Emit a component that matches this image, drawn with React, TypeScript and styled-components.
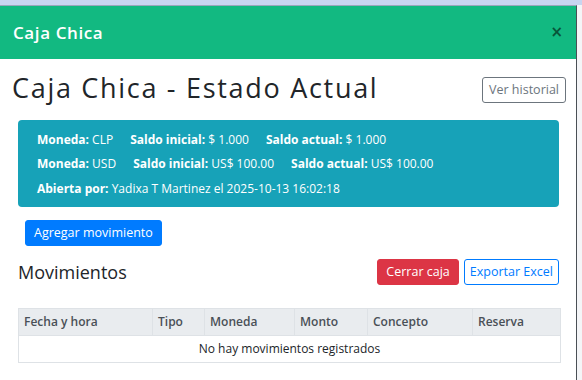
import React from 'react';
import styled, { createGlobalStyle } from 'styled-components';

const GlobalStyle = createGlobalStyle`
  html, body {
    margin: 0;
    padding: 0;
  }
  body {
    background: linear-gradient(180deg, #c8d5f0 0px, #c8d5f0 5px, #f4f5f7 5px);
    font-family: 'Open Sans', 'Liberation Sans', sans-serif;
    color: #212529;
    overflow: hidden;
  }
`;

const Modal = styled.div`
  width: 577px;
  margin-top: 5px;
  min-height: 375px;
  background: #fff;
  border-top: 1px solid #9aa6bb;
  border-right: 1px solid #4a4f55;
  box-sizing: border-box;
`;

const Header = styled.header`
  height: 53px;
  display: flex;
  align-items: center;
  justify-content: space-between;
  padding: 0 13px 0 13px;
  background: #12b981;
`;

const HeaderTitle = styled.h5`
  margin: 0;
  font-size: 17px;
  font-weight: 600;
  letter-spacing: 0.6px;
  color: #fff;
`;

const Close = styled.button`
  border: 0;
  background: none;
  padding: 0;
  font-size: 15px;
  line-height: 1;
  font-weight: 700;
  color: #000;
  opacity: 0.55;
  font-family: 'DejaVu Sans', sans-serif;
`;

const Body = styled.div`
  display: flex;
  flex-direction: column;
`;

const TitleRow = styled.div`
  display: flex;
  align-items: center;
  justify-content: space-between;
  padding: 10px 10px 0 12px;
`;

const Title = styled.h2`
  margin: 0;
  font-size: 27px;
  font-weight: 400;
  letter-spacing: 1.7px;
  color: #212529;
`;

const Button = styled.button<{ $variant: 'primary' | 'danger' | 'outlinePrimary' | 'outlineSecondary' }>`
  font-family: inherit;
  font-size: 12.5px;
  height: 26px;
  padding: 0 ${(p) => (p.$variant === 'outlinePrimary' ? 5 : p.$variant === 'outlineSecondary' ? 6 : 8)}px;
  border-radius: 3px;
  border: 1px solid
    ${(p) =>
      p.$variant === 'primary' || p.$variant === 'outlinePrimary'
        ? '#007bff'
        : p.$variant === 'danger'
        ? '#dc3545'
        : '#6c757d'};
  background: ${(p) =>
    p.$variant === 'primary' ? '#007bff' : p.$variant === 'danger' ? '#dc3545' : '#fff'};
  color: ${(p) =>
    p.$variant === 'outlinePrimary' ? '#007bff' : p.$variant === 'outlineSecondary' ? '#6c757d' : '#fff'};
`;

const HistoryButton = styled(Button)`
  margin-top: 4px;
`;

const Content = styled.div`
  padding: 14px 17px 0 18px;
  display: flex;
  flex-direction: column;
`;

const InfoBox = styled.div`
  background: #17a2b8;
  border-radius: 4px;
  padding: 7px 19px 6px;
  color: #fff;
  font-size: 12px;
  display: flex;
  flex-direction: column;
`;

const InfoLine = styled.div`
  display: flex;
  gap: 17px;
  height: 24.5px;
  align-items: center;
`;

const Label = styled.b`
  font-weight: 700;
`;

const AddRow = styled.div`
  padding: 13px 0 0 7px;
`;

const SectionRow = styled.div`
  display: flex;
  align-items: center;
  justify-content: space-between;
  margin-top: 13px;
`;

const SectionTitle = styled.h4`
  margin: 0;
  font-size: 18px;
  font-weight: 400;
`;

const Actions = styled.div`
  display: flex;
  gap: 5px;
`;

const Table = styled.table`
  margin-top: 23px;
  width: 542px;
  table-layout: fixed;
  border-collapse: collapse;
  font-size: 12px;
`;

const Th = styled.th<{ $w: number }>`
  box-sizing: border-box;
  width: ${(p) => p.$w}px;
  height: 27px;
  text-align: left;
  padding: 0 5px;
  background: #e9ecef;
  border: 1px solid #dee2e6;
  color: #495057;
  font-weight: 600;
`;

const EmptyCell = styled.td`
  height: 24px;
  text-align: center;
  border: 1px solid #dee2e6;
  color: #212529;
`;

const columns: [string, number][] = [
  ['Fecha y hora', 134],
  ['Tipo', 52],
  ['Moneda', 90],
  ['Monto', 73],
  ['Concepto', 105],
  ['Reserva', 88],
];

export default function App() {
  return (
    <>
      <GlobalStyle />
      <Modal>
        <Header>
          <HeaderTitle>Caja Chica</HeaderTitle>
          <Close aria-label="Cerrar">×</Close>
        </Header>
        <Body>
          <TitleRow>
            <Title>Caja Chica - Estado Actual</Title>
            <HistoryButton $variant="outlineSecondary">Ver historial</HistoryButton>
          </TitleRow>
          <Content>
            <InfoBox>
              <InfoLine>
                <span><Label>Moneda:</Label> CLP</span>
                <span><Label>Saldo inicial:</Label> $ 1.000</span>
                <span><Label>Saldo actual:</Label> $ 1.000</span>
              </InfoLine>
              <InfoLine>
                <span><Label>Moneda:</Label> USD</span>
                <span><Label>Saldo inicial:</Label> US$ 100.00</span>
                <span><Label>Saldo actual:</Label> US$ 100.00</span>
              </InfoLine>
              <InfoLine>
                <span><Label>Abierta por:</Label> Yadixa T Martinez el 2025-10-13 16:02:18</span>
              </InfoLine>
            </InfoBox>
            <AddRow>
              <Button $variant="primary">Agregar movimiento</Button>
            </AddRow>
            <SectionRow>
              <SectionTitle>Movimientos</SectionTitle>
              <Actions>
                <Button $variant="danger">Cerrar caja</Button>
                <Button $variant="outlinePrimary">Exportar Excel</Button>
              </Actions>
            </SectionRow>
            <Table>
              <thead>
                <tr>
                  {columns.map(([name, w]) => (
                    <Th key={name} $w={w}>{name}</Th>
                  ))}
                </tr>
              </thead>
              <tbody>
                <tr>
                  <EmptyCell colSpan={6}>No hay movimientos registrados</EmptyCell>
                </tr>
              </tbody>
            </Table>
          </Content>
        </Body>
      </Modal>
    </>
  );
}
